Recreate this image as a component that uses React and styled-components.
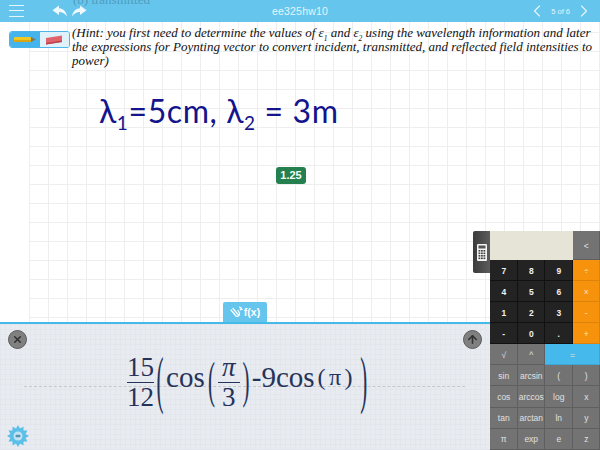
import React from 'react';
import styled, { createGlobalStyle } from 'styled-components';
import { ChevronLeft, ChevronRight, ArrowUp, X } from 'lucide-react';

const GlobalStyle = createGlobalStyle`
  html, body { margin: 0; padding: 0; background: #fff; }
  body { font-family: "Liberation Sans", Arial, sans-serif; }
`;

const Screen = styled.div`
  position: relative;
  width: 600px;
  height: 450px;
  overflow: hidden;
  display: flex;
  flex-direction: column;
`;

const TopBar = styled.header`
  position: relative;
  flex: 0 0 22px;
  display: grid;
  grid-template-columns: 1fr 160px 1fr;
  align-items: center;
  background: #66c5ec;
  color: #e4f5fc;
  overflow: hidden;
`;

const BarLeft = styled.div`
  display: flex;
  align-items: center;
  gap: 28px;
  padding-left: 9px;
`;

const Burger = styled.div`
  width: 15px;
  height: 10px;
  border-top: 1px solid #e4f5fc;
  border-bottom: 1px solid #e4f5fc;
  position: relative;
  &::after {
    content: '';
    position: absolute;
    left: 0;
    right: 0;
    top: 4px;
    height: 1px;
    background: #e4f5fc;
  }
`;

const History = styled.div`
  display: flex;
  gap: 3px;
`;

const Title = styled.div`
  text-align: center;
  font-size: 10.5px;
  letter-spacing: 0.2px;
`;

const Pager = styled.div`
  display: flex;
  justify-content: flex-end;
  align-items: center;
  gap: 4px;
  padding-right: 6px;
  font-size: 7.5px;
`;

const Ghost = styled.span`
  position: absolute;
  left: 73px;
  top: -8px;
  font: 13px "Liberation Serif", serif;
  color: #4f9dbd;
`;

const Page = styled.main`
  flex: 1;
  position: relative;
  background-color: #fff;
  background-image:
    linear-gradient(#eeeeee 1px, transparent 1px),
    linear-gradient(90deg, #eeeeee 1px, transparent 1px);
  background-size: 19px 19px;
  background-position: 29px 10px;
`;

const PageMargin = styled.div`
  position: absolute;
  left: 0;
  top: 0;
  bottom: 0;
  width: 29px;
  background: #fff;
`;

const HintRow = styled.div`
  position: relative;
  display: flex;
  align-items: flex-start;
  gap: 2px;
  padding: 4px 0 0 9px;
`;

const ToolSwitch = styled.div`
  flex: 0 0 61px;
  height: 17px;
  margin-top: 5px;
  display: flex;
  border: 1px solid #4db5ea;
  border-radius: 3px;
  overflow: hidden;
  box-sizing: border-box;
`;

const ToolCell = styled.div`
  flex: 1;
  display: flex;
  align-items: center;
  justify-content: center;
  background: ${p => (p.$active ? '#dff1fb' : '#45b4ec')};
`;

const Hint = styled.div`
  font: italic 13px/14.2px "Liberation Serif", serif;
  color: #111;
`;

const HintLine = styled.div`
  white-space: nowrap;
`;

const Sub = styled.sub`
  font-size: 7.5px;
  line-height: 0;
`;

const Ink = styled.div`
  position: absolute;
  left: 99px;
  top: 67px;
  font: 400 32px/44px Lato, "Noto Sans", sans-serif;
  letter-spacing: 0.6px;
  color: #14148c;
  white-space: nowrap;
  sub { font-size: 19px; line-height: 0; }
`;

const Score = styled.span`
  position: absolute;
  left: 276px;
  top: 145px;
  width: 30px;
  height: 17px;
  border-radius: 3px;
  background: #24804f;
  color: #f2fff8;
  font: bold 11px/17px "Liberation Sans", sans-serif;
  text-align: center;
`;

const FxTab = styled.button`
  position: absolute;
  left: 223px;
  bottom: 0;
  width: 44px;
  height: 20px;
  padding: 0;
  border: 0;
  border-radius: 2px 2px 0 0;
  background: #66c5ec;
  color: #fff;
  display: flex;
  align-items: center;
  justify-content: center;
  gap: 1px;
  font: bold 10.5px "Liberation Sans", sans-serif;
`;

const MathPanel = styled.section`
  position: relative;
  flex: 0 0 126px;
  border-top: 2px solid #45b9e8;
  background-color: #e8ebf0;
  background-image:
    linear-gradient(#e3e6ec 1px, transparent 1px),
    linear-gradient(90deg, #e3e6ec 1px, transparent 1px);
  background-size: 5px 5px;
  display: flex;
  align-items: center;
  justify-content: center;
  padding-right: 105px;
`;

const DashLine = styled.div`
  position: absolute;
  left: 24px;
  right: 135px;
  top: 62px;
  border-top: 1px dashed #c6c8cc;
`;

const Expression = styled.div`
  position: relative;
  display: flex;
  align-items: center;
  margin-bottom: 10px;
  color: #25335a;
  font: 29px/1 "Liberation Serif", serif;
  white-space: nowrap;
`;

const Term = styled.span`
  margin: 0 ${p => p.$gap || 0}px 10px;
  font-size: ${p => p.$size || 29}px;
  letter-spacing: ${p => p.$spacing || 0}px;
`;

const Fraction = styled.span`
  display: inline-flex;
  flex-direction: column;
  align-items: center;
  min-width: ${p => p.$min || 0}px;
  font-size: 27px;
  line-height: 29px;
  span + span { border-top: 1px solid #25335a; width: 100%; text-align: center; }
`;

const Paren = styled.span`
  display: inline-block;
  width: ${p => p.$w || 9}px;
  text-align: center;
  font-size: 30px;
  transform: scale(${p => p.$sx || 0.7}, ${p => p.$sy || 1.6});
  transform-origin: center;
  margin-top: -4px;
`;

const RoundButton = styled.div`
  position: absolute;
  top: ${p => p.$top}px;
  ${p => (p.$right ? `right: ${p.$right}px;` : `left: ${p.$left}px;`)}
  width: 19px;
  height: 19px;
  border-radius: 50%;
  background: #808080;
  border: 1px solid #5a5a5a;
  box-sizing: border-box;
  display: flex;
  align-items: center;
  justify-content: center;
  color: #333;
`;

const Gear = styled.svg`
  position: absolute;
  left: 7px;
  bottom: 3px;
`;

const CalcHandle = styled.div`
  position: absolute;
  left: 473px;
  top: 231px;
  width: 17px;
  height: 42px;
  background: linear-gradient(90deg, #3b3b3b, #5c5c5c);
  border-radius: 2px 0 0 2px;
  display: flex;
  align-items: center;
  justify-content: center;
`;

const Calc = styled.aside`
  position: absolute;
  left: 490px;
  top: 231px;
  width: 110px;
  height: 219px;
  display: grid;
  grid-template-columns: repeat(4, 1fr);
  grid-template-rows: 29px repeat(4, 21px) repeat(5, 1fr);
  font: 8.5px "Liberation Sans", sans-serif;
`;

const Display = styled.div`
  grid-column: span 3;
  background: #e6e4d6;
`;

const keyTones = {
  dark: '#232323',
  op: '#f7920c',
  grey: '#737373',
  blue: '#45b9ec',
};

const Key = styled.div`
  grid-column: span ${p => p.$span || 1};
  display: flex;
  align-items: center;
  justify-content: center;
  background: ${p => keyTones[p.$tone]};
  color: ${p => (p.$tone === 'dark' ? '#f0f0f0' : p.$tone === 'grey' ? '#e0e0e0' : '#fbe3c0')};
  font-weight: ${p => (p.$tone === 'dark' ? 'bold' : 'normal')};
  box-shadow: inset -1px -1px 0 ${p => (p.$tone === 'dark' ? '#111' : p.$tone === 'grey' ? '#5f5f5f' : 'rgba(0,0,0,0.1)')};
`;

const keys = [
  ['<', 'grey'],
  ['7', 'dark'], ['8', 'dark'], ['9', 'dark'], ['÷', 'op'],
  ['4', 'dark'], ['5', 'dark'], ['6', 'dark'], ['×', 'op'],
  ['1', 'dark'], ['2', 'dark'], ['3', 'dark'], ['-', 'op'],
  ['-', 'dark'], ['0', 'dark'], ['.', 'dark'], ['+', 'op'],
  ['√', 'grey'], ['^', 'grey'], ['=', 'blue', 2],
  ['sin', 'grey'], ['arcsin', 'grey'], ['(', 'grey'], [')', 'grey'],
  ['cos', 'grey'], ['arccos', 'grey'], ['log', 'grey'], ['x', 'grey'],
  ['tan', 'grey'], ['arctan', 'grey'], ['ln', 'grey'], ['y', 'grey'],
  ['π', 'grey'], ['exp', 'grey'], ['e', 'grey'], ['z', 'grey'],
];

const HistoryArrow = ({ flip }) => (
  <svg width="16" height="12" viewBox="0 0 16 12" style={flip ? { transform: 'scaleX(-1)' } : undefined}>
    <path d="M7 0.5 L0.5 5.2 L7 10 V7 C10.5 7 13 8.5 15 11.5 C14.5 7 11.5 3.6 7 3.2 Z" fill="#eef9fe" />
  </svg>
);

const Pencil = () => (
  <svg width="22" height="7" viewBox="0 0 22 7">
    <rect x="0" y="1" width="17" height="5" rx="1" fill="#f2c81e" />
    <rect x="0" y="4" width="17" height="2" fill="#d9a514" />
    <path d="M17 1 L22 3.5 L17 6 Z" fill="#7f7a55" />
  </svg>
);

const Eraser = () => (
  <svg width="18" height="10" viewBox="0 0 18 10">
    <path d="M1 3 L17 0.5 L17 7 L1 9.5 Z" fill="#e0626a" />
    <path d="M1 8 L17 5.5 L17 7 L1 9.5 Z" fill="#b9434c" />
  </svg>
);

const CalcIcon = () => (
  <svg width="10" height="17" viewBox="0 0 10 17">
    <rect width="10" height="17" rx="1" fill="#f4f4f4" />
    <rect x="1.5" y="1.5" width="7" height="3" fill="#555" />
    {[6, 8.5, 11, 13.5].map(y =>
      [1.5, 4, 6.5].map(x => <rect key={`${x}-${y}`} x={x} y={y} width="1.8" height="1.6" fill="#444" />)
    )}
  </svg>
);

const Wave = () => (
  <svg width="13" height="12" viewBox="0 0 13 12" fill="none" stroke="#fff" strokeWidth="1.2" strokeLinecap="round">
    <path d="M1 4 L6 10 M3 2.5 L8 8.5 M6 10 C8 11 10 9.5 9.5 7 L8 4.5" />
    <path d="M9.5 1 Q11.5 1.5 12 3.5 M10 3 Q10.6 3.2 10.8 4" />
  </svg>
);

const gearPoints = Array.from({ length: 24 }, (_, i) => {
  const r = i % 2 ? 7.8 : 11;
  const a = (i * Math.PI) / 12;
  return `${11 + r * Math.cos(a)},${11 + r * Math.sin(a)}`;
}).join(' ');

const SettingsGear = () => (
  <Gear width="22" height="22" viewBox="0 0 22 22">
    <polygon points={gearPoints} fill="#5cbfe8" />
    <circle cx="11" cy="11" r="4.5" fill="#bfe3f3" />
    <rect x="8.5" y="9.8" width="5" height="2.4" rx="1" fill="#5a93b0" />
  </Gear>
);

export default function App() {
  return (
    <Screen>
      <GlobalStyle />
      <TopBar>
        <Ghost>(b) transmitted</Ghost>
        <BarLeft>
          <Burger />
          <History>
            <HistoryArrow />
            <HistoryArrow flip />
          </History>
        </BarLeft>
        <Title>ee325hw10</Title>
        <Pager>
          <ChevronLeft size={20} strokeWidth={1.4} />
          <span>5 of 6</span>
          <ChevronRight size={20} strokeWidth={1.4} />
        </Pager>
      </TopBar>

      <Page>
        <PageMargin />
        <HintRow>
          <ToolSwitch>
            <ToolCell><Pencil /></ToolCell>
            <ToolCell $active><Eraser /></ToolCell>
          </ToolSwitch>
          <Hint>
            <HintLine>(Hint: you first need to determine the values of ε<Sub>1</Sub> and ε<Sub>2</Sub> using the wavelength information and later</HintLine>
            <HintLine>the expressions for Poynting vector to convert incident, transmitted, and reflected field intensities to</HintLine>
            <HintLine>power)</HintLine>
          </Hint>
        </HintRow>
        <Ink>λ<sub>1</sub>=5cm, λ<sub>2</sub> = 3m</Ink>
        <Score>1.25</Score>
        <FxTab><Wave />f(x)</FxTab>
      </Page>

      <MathPanel>
        <DashLine />
        <RoundButton $top={6} $left={8}><X size={11} strokeWidth={3.5} /></RoundButton>
        <RoundButton $top={6} $right={118}><ArrowUp size={13} strokeWidth={3} /></RoundButton>
        <Expression>
          <Fraction><span>15</span><span>12</span></Fraction>
          <Paren $sx={0.7} $sy={2.1} $w={12}>(</Paren>
          <Term>cos</Term>
          <Paren $sy={1.7} $w={13}>(</Paren>
          <Fraction $min={22}><span><i>π</i></span><span>3</span></Fraction>
          <Paren $sy={1.7} $w={12}>)</Paren>
          <Term>-9cos</Term>
          <Term $size={24} $gap={3} $spacing={3.4}>(π)</Term>
          <Paren $sx={0.7} $sy={2.1} $w={9}>)</Paren>
        </Expression>
        <SettingsGear />
      </MathPanel>

      <CalcHandle><CalcIcon /></CalcHandle>
      <Calc>
        <Display />
        {keys.map(([label, tone, span], i) => (
          <Key key={i} $tone={tone} $span={span}>{label}</Key>
        ))}
      </Calc>
    </Screen>
  );
}
